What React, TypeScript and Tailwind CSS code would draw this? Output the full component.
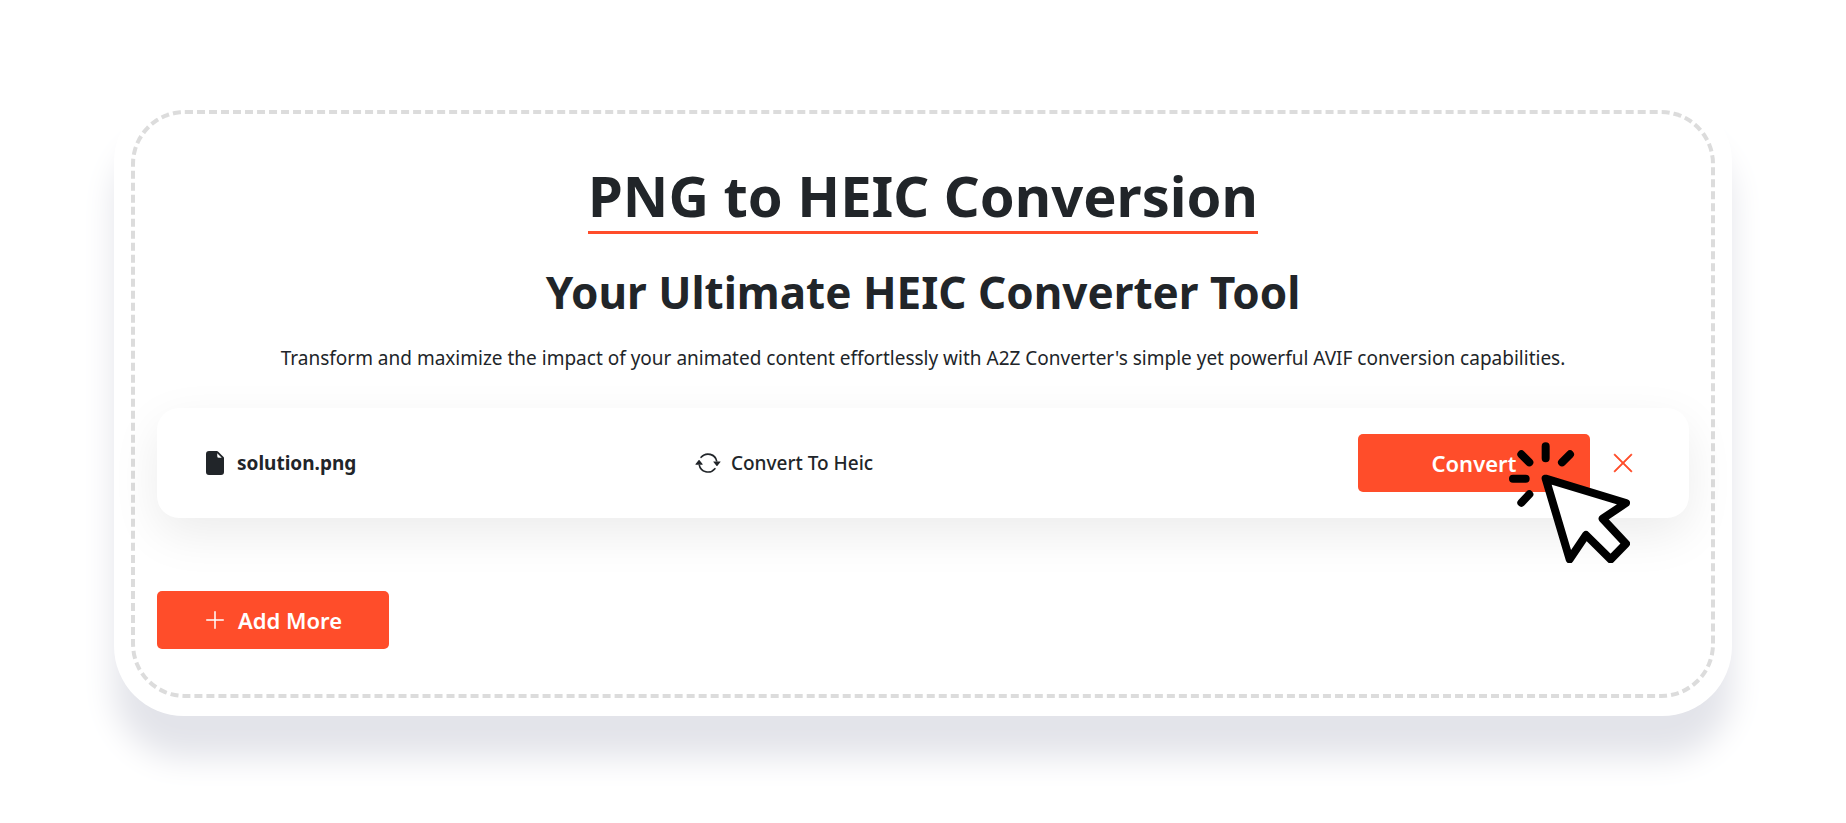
import { BsArrowRepeat, BsFileEarmarkFill, BsPlusLg, BsXLg } from 'react-icons/bs';

function ClickPointer() {
  return (
    <svg
      viewBox="507 128 363 363"
      aria-hidden="true"
      className="pointer-events-none absolute top-2 -right-10 size-[121px]"
      fill="none"
      stroke="#000"
      strokeWidth="24"
      strokeLinecap="round"
      strokeLinejoin="round"
    >
      <path d="M617 141v36M544 165l24 24M690 165l-24 24M519 238h38M568 285l-24 25" />
      <path fill="#fff" d="M617 238l241 73-70 47 70 75-46 47-74-73-49 73z" />
    </svg>
  );
}

function FileRow() {
  return (
    <div className="mt-[34px] grid grid-cols-[34%_1fr_auto] items-center rounded-[22px] bg-white py-[26px] pr-[54px] pl-[46px] shadow-[0_16px_48px_rgba(0,0,0,0.08)]">
      <div className="flex items-center gap-[10px] text-[19px] font-bold">
        <BsFileEarmarkFill className="size-6" />
        <span>solution.png</span>
      </div>
      <div className="flex items-center gap-[10px] pl-[5px] text-[19px] font-medium">
        <BsArrowRepeat className="size-[26px]" />
        <span>Convert To Heic</span>
      </div>
      <div className="flex items-center gap-[21px]">
        <div className="relative">
          <button type="button" className="h-[58px] w-[232px] rounded-[5px] bg-[#ff4d2a] text-[22px] font-semibold text-white">
            Convert
          </button>
          <ClickPointer />
        </div>
        <button type="button" aria-label="Remove file" className="text-[#ff4d2a]">
          <BsXLg className="size-6" strokeWidth="0.4" />
        </button>
      </div>
    </div>
  );
}

export default function App() {
  return (
    <main className="bg-white px-[114px] py-[92px] font-['Noto_Sans','Open_Sans',sans-serif] text-[#212529]">
      <section className="rounded-[70px] bg-white px-[17px] py-[18px] shadow-[0_42px_32px_#e3e4ea]">
        <div className="rounded-[54px] border-4 border-dashed border-[#dcdcdc] px-[22px] pt-[45px] pb-[45px]">
          <div className="text-center">
            <h1 className="inline-block border-b-3 border-[#ff4d2a] text-[56px] leading-[72px] font-bold">PNG to HEIC Conversion</h1>
            <h2 className="mt-6 text-[44px] leading-[68px] font-bold">Your Ultimate HEIC Converter Tool</h2>
            <p className="mt-4 text-[19px] leading-8">
              Transform and maximize the impact of your animated content effortlessly with A2Z Converter's simple yet powerful AVIF
              conversion capabilities.
            </p>
          </div>
          <FileRow />
          <button
            type="button"
            className="mt-[73px] flex h-[58px] w-[232px] items-center gap-[11px] rounded-[5px] bg-[#ff4d2a] pl-[46px] text-[22px] font-semibold text-white"
          >
            <BsPlusLg className="size-6" />
            Add More
          </button>
        </div>
      </section>
    </main>
  );
}
